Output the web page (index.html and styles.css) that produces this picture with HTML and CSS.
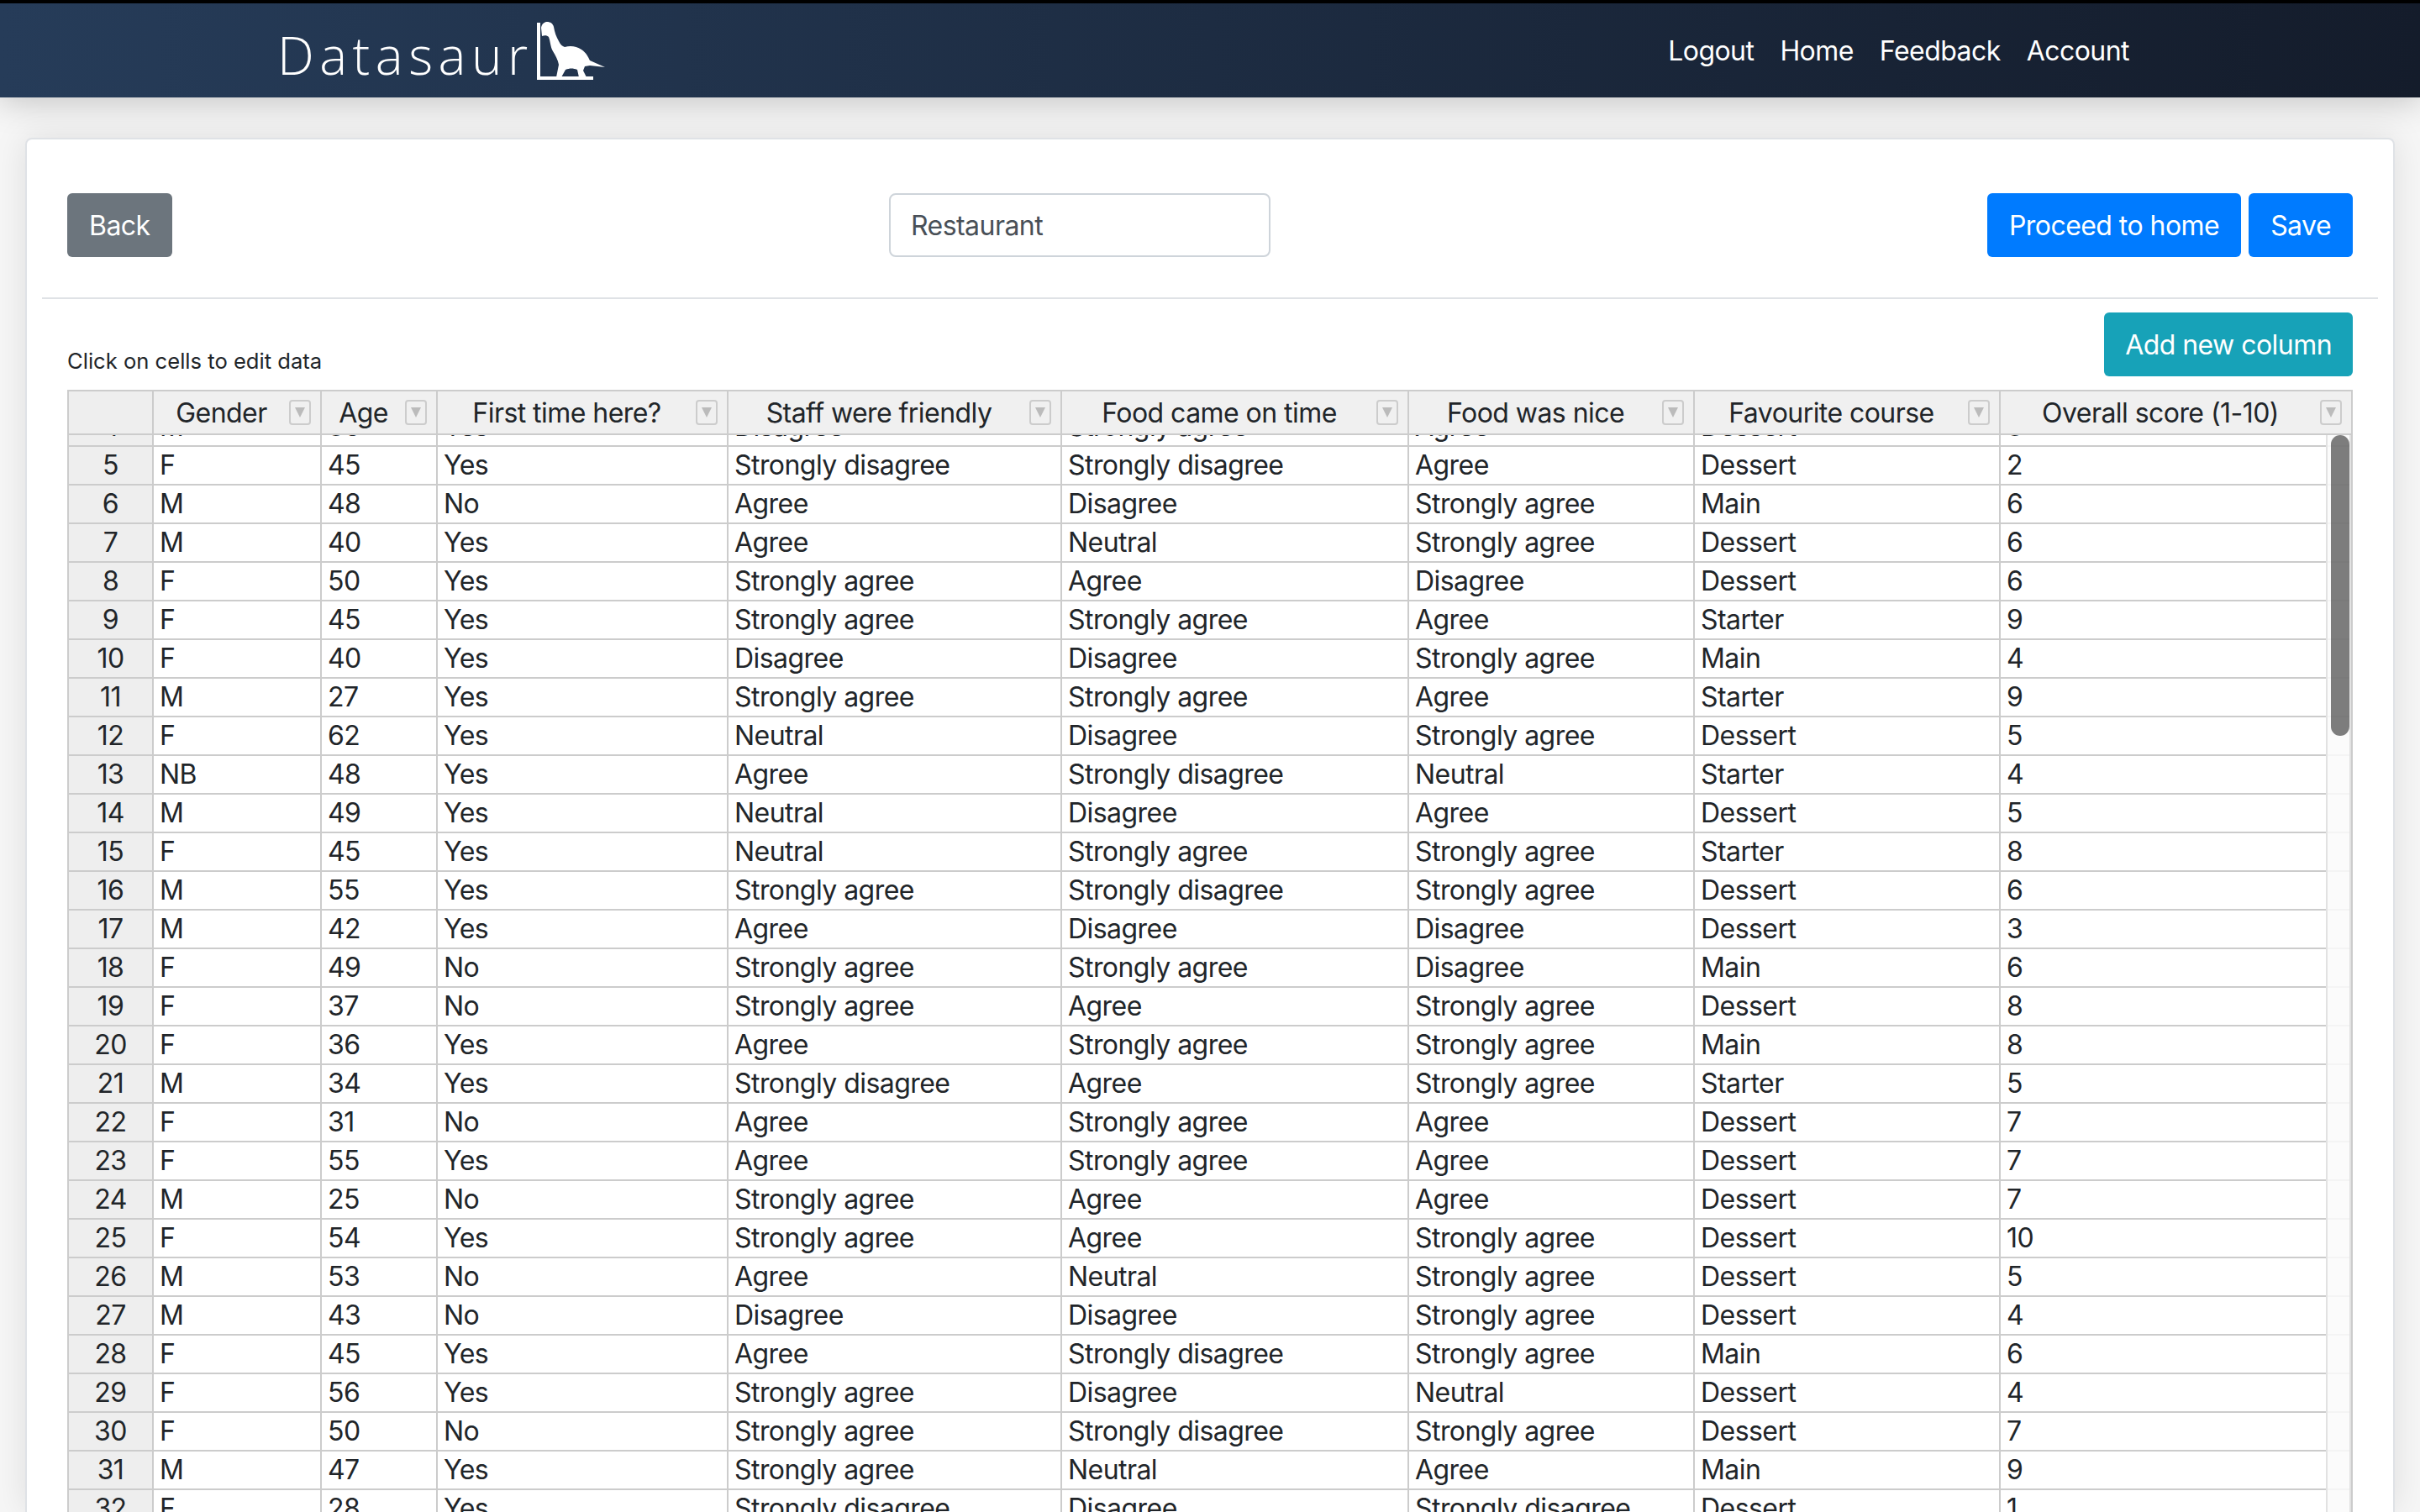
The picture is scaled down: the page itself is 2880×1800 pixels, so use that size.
FILE: index.html
```html
<!DOCTYPE html>
<html lang="en">
<head>
<meta charset="utf-8">
<title>Datasaur</title>
<link rel="stylesheet" href="styles.css">
</head>
<body>
<nav class="nav">
  <a class="brand"><span class="brand-text">Datasaur</span><svg class="dino" viewBox="0 0 100 80" aria-hidden="true"><path class="dino-shape" d="M7 7h4v64h63v4H7z"/><path class="dino-shape" d="M12 13C13 8 16 6 19 6c4 0 7 2 8 6 1 6 3 12 6 17 2 4 4 6 7 7 7-2 14-1 20 3 6 4 8 9 10 13l18 8-18-2-6 1-2 5 4 8h-9l-2-9c-5-2-9-2-14 0l-5 9h-6l3-15c-1-6-4-11-7-16-3-5-3-12-5-17-2-2-5-2-8-1z"/></svg></a>
  <div class="nav-links"><a>Logout</a><a>Home</a><a>Feedback</a><a>Account</a></div>
</nav>
<main class="card">
  <div class="toolbar">
    <button class="btn btn-grey">Back</button>
    <div class="name-box">Restaurant</div>
    <div class="actions"><button class="btn btn-blue">Proceed to home</button><button class="btn btn-blue">Save</button></div>
  </div>
  <hr class="rule">
  <div class="sheet-area">
    <div class="sheet-head">
      <small class="hint">Click on cells to edit data</small>
      <button class="btn btn-teal">Add new column</button>
    </div>
    <div class="sheet">
      <div class="row head">
        <div class="c n"></div>
        <div class="c"><span class="label">Gender</span><span class="filter"></span></div>
        <div class="c"><span class="label">Age</span><span class="filter"></span></div>
        <div class="c"><span class="label">First time here?</span><span class="filter"></span></div>
        <div class="c"><span class="label">Staff were friendly</span><span class="filter"></span></div>
        <div class="c"><span class="label">Food came on time</span><span class="filter"></span></div>
        <div class="c"><span class="label">Food was nice</span><span class="filter"></span></div>
        <div class="c"><span class="label">Favourite course</span><span class="filter"></span></div>
        <div class="c"><span class="label">Overall score (1-10)</span><span class="filter"></span></div>
      </div>
      <div class="viewport">
        <div class="rows">
          <div class="row"><div class="c n">4</div><div class="c">M</div><div class="c">36</div><div class="c">Yes</div><div class="c">Disagree</div><div class="c">Strongly agree</div><div class="c">Agree</div><div class="c">Dessert</div><div class="c">3</div></div>
          <div class="row"><div class="c n">5</div><div class="c">F</div><div class="c">45</div><div class="c">Yes</div><div class="c">Strongly disagree</div><div class="c">Strongly disagree</div><div class="c">Agree</div><div class="c">Dessert</div><div class="c">2</div></div>
          <div class="row"><div class="c n">6</div><div class="c">M</div><div class="c">48</div><div class="c">No</div><div class="c">Agree</div><div class="c">Disagree</div><div class="c">Strongly agree</div><div class="c">Main</div><div class="c">6</div></div>
          <div class="row"><div class="c n">7</div><div class="c">M</div><div class="c">40</div><div class="c">Yes</div><div class="c">Agree</div><div class="c">Neutral</div><div class="c">Strongly agree</div><div class="c">Dessert</div><div class="c">6</div></div>
          <div class="row"><div class="c n">8</div><div class="c">F</div><div class="c">50</div><div class="c">Yes</div><div class="c">Strongly agree</div><div class="c">Agree</div><div class="c">Disagree</div><div class="c">Dessert</div><div class="c">6</div></div>
          <div class="row"><div class="c n">9</div><div class="c">F</div><div class="c">45</div><div class="c">Yes</div><div class="c">Strongly agree</div><div class="c">Strongly agree</div><div class="c">Agree</div><div class="c">Starter</div><div class="c">9</div></div>
          <div class="row"><div class="c n">10</div><div class="c">F</div><div class="c">40</div><div class="c">Yes</div><div class="c">Disagree</div><div class="c">Disagree</div><div class="c">Strongly agree</div><div class="c">Main</div><div class="c">4</div></div>
          <div class="row"><div class="c n">11</div><div class="c">M</div><div class="c">27</div><div class="c">Yes</div><div class="c">Strongly agree</div><div class="c">Strongly agree</div><div class="c">Agree</div><div class="c">Starter</div><div class="c">9</div></div>
          <div class="row"><div class="c n">12</div><div class="c">F</div><div class="c">62</div><div class="c">Yes</div><div class="c">Neutral</div><div class="c">Disagree</div><div class="c">Strongly agree</div><div class="c">Dessert</div><div class="c">5</div></div>
          <div class="row"><div class="c n">13</div><div class="c">NB</div><div class="c">48</div><div class="c">Yes</div><div class="c">Agree</div><div class="c">Strongly disagree</div><div class="c">Neutral</div><div class="c">Starter</div><div class="c">4</div></div>
          <div class="row"><div class="c n">14</div><div class="c">M</div><div class="c">49</div><div class="c">Yes</div><div class="c">Neutral</div><div class="c">Disagree</div><div class="c">Agree</div><div class="c">Dessert</div><div class="c">5</div></div>
          <div class="row"><div class="c n">15</div><div class="c">F</div><div class="c">45</div><div class="c">Yes</div><div class="c">Neutral</div><div class="c">Strongly agree</div><div class="c">Strongly agree</div><div class="c">Starter</div><div class="c">8</div></div>
          <div class="row"><div class="c n">16</div><div class="c">M</div><div class="c">55</div><div class="c">Yes</div><div class="c">Strongly agree</div><div class="c">Strongly disagree</div><div class="c">Strongly agree</div><div class="c">Dessert</div><div class="c">6</div></div>
          <div class="row"><div class="c n">17</div><div class="c">M</div><div class="c">42</div><div class="c">Yes</div><div class="c">Agree</div><div class="c">Disagree</div><div class="c">Disagree</div><div class="c">Dessert</div><div class="c">3</div></div>
          <div class="row"><div class="c n">18</div><div class="c">F</div><div class="c">49</div><div class="c">No</div><div class="c">Strongly agree</div><div class="c">Strongly agree</div><div class="c">Disagree</div><div class="c">Main</div><div class="c">6</div></div>
          <div class="row"><div class="c n">19</div><div class="c">F</div><div class="c">37</div><div class="c">No</div><div class="c">Strongly agree</div><div class="c">Agree</div><div class="c">Strongly agree</div><div class="c">Dessert</div><div class="c">8</div></div>
          <div class="row"><div class="c n">20</div><div class="c">F</div><div class="c">36</div><div class="c">Yes</div><div class="c">Agree</div><div class="c">Strongly agree</div><div class="c">Strongly agree</div><div class="c">Main</div><div class="c">8</div></div>
          <div class="row"><div class="c n">21</div><div class="c">M</div><div class="c">34</div><div class="c">Yes</div><div class="c">Strongly disagree</div><div class="c">Agree</div><div class="c">Strongly agree</div><div class="c">Starter</div><div class="c">5</div></div>
          <div class="row"><div class="c n">22</div><div class="c">F</div><div class="c">31</div><div class="c">No</div><div class="c">Agree</div><div class="c">Strongly agree</div><div class="c">Agree</div><div class="c">Dessert</div><div class="c">7</div></div>
          <div class="row"><div class="c n">23</div><div class="c">F</div><div class="c">55</div><div class="c">Yes</div><div class="c">Agree</div><div class="c">Strongly agree</div><div class="c">Agree</div><div class="c">Dessert</div><div class="c">7</div></div>
          <div class="row"><div class="c n">24</div><div class="c">M</div><div class="c">25</div><div class="c">No</div><div class="c">Strongly agree</div><div class="c">Agree</div><div class="c">Agree</div><div class="c">Dessert</div><div class="c">7</div></div>
          <div class="row"><div class="c n">25</div><div class="c">F</div><div class="c">54</div><div class="c">Yes</div><div class="c">Strongly agree</div><div class="c">Agree</div><div class="c">Strongly agree</div><div class="c">Dessert</div><div class="c">10</div></div>
          <div class="row"><div class="c n">26</div><div class="c">M</div><div class="c">53</div><div class="c">No</div><div class="c">Agree</div><div class="c">Neutral</div><div class="c">Strongly agree</div><div class="c">Dessert</div><div class="c">5</div></div>
          <div class="row"><div class="c n">27</div><div class="c">M</div><div class="c">43</div><div class="c">No</div><div class="c">Disagree</div><div class="c">Disagree</div><div class="c">Strongly agree</div><div class="c">Dessert</div><div class="c">4</div></div>
          <div class="row"><div class="c n">28</div><div class="c">F</div><div class="c">45</div><div class="c">Yes</div><div class="c">Agree</div><div class="c">Strongly disagree</div><div class="c">Strongly agree</div><div class="c">Main</div><div class="c">6</div></div>
          <div class="row"><div class="c n">29</div><div class="c">F</div><div class="c">56</div><div class="c">Yes</div><div class="c">Strongly agree</div><div class="c">Disagree</div><div class="c">Neutral</div><div class="c">Dessert</div><div class="c">4</div></div>
          <div class="row"><div class="c n">30</div><div class="c">F</div><div class="c">50</div><div class="c">No</div><div class="c">Strongly agree</div><div class="c">Strongly disagree</div><div class="c">Strongly agree</div><div class="c">Dessert</div><div class="c">7</div></div>
          <div class="row"><div class="c n">31</div><div class="c">M</div><div class="c">47</div><div class="c">Yes</div><div class="c">Strongly agree</div><div class="c">Neutral</div><div class="c">Agree</div><div class="c">Main</div><div class="c">9</div></div>
          <div class="row"><div class="c n">32</div><div class="c">F</div><div class="c">28</div><div class="c">Yes</div><div class="c">Strongly disagree</div><div class="c">Disagree</div><div class="c">Strongly disagree</div><div class="c">Dessert</div><div class="c">1</div></div>
        </div>
        <div class="track"><div class="thumb"></div></div>
      </div>
    </div>
  </div>
</main>
</body>
</html>
```
FILE: styles.css
```css
* { box-sizing: border-box; }
html, body { height: 100%; margin: 0; overflow: hidden; }
body {
  display: flex;
  flex-direction: column;
  background: #f6f6f6;
  color: #212529;
  font-family: Inter, "Liberation Sans", sans-serif;
  font-size: 32px;
  line-height: 44px;
  letter-spacing: -.55px;
}
.nav {
  position: relative;
  z-index: 2;
  flex: none;
  height: 116px;
  border-top: 4px solid #000;
  background: linear-gradient(90deg, #263c59, #141c2b);
  box-shadow: 0 4px 40px rgba(0, 0, 0, .22);
  display: flex;
  align-items: center;
  padding: 0 346px 0 330px;
  color: #fff;
}
.brand { display: flex; align-items: flex-start; flex: 1; height: 100%; }
.brand-text {
  font-family: "Open Sans", sans-serif;
  font-weight: 350;
  font-size: 62px;
  line-height: 84px;
  letter-spacing: 6.5px;
  margin-top: 19px;
}
.dino { width: 100px; height: 80px; margin: 16px 0 0 -3px; }
.dino-shape { fill: #fff; }
.nav-links { display: flex; gap: 31px; padding-top: 2px; }
.card {
  flex: 1;
  min-height: 0;
  margin: 48px 30px 0;
  padding: 64px 18px 0;
  background: #fff;
  border: 2px solid #dfe2e6;
  border-bottom: 0;
  border-radius: 8px 8px 0 0;
  box-shadow: 0 0 40px rgba(0, 0, 0, .1);
  overflow: hidden;
  display: flex;
  flex-direction: column;
}
.toolbar {
  flex: none;
  display: grid;
  grid-template-columns: 978px 454px 1fr;
  padding: 0 30px;
}
.btn {
  height: 76px;
  padding: 2px 26px 0;
  border: 0;
  border-radius: 6px;
  color: #fff;
  font: inherit;
  letter-spacing: inherit;
  white-space: nowrap;
}
.toolbar .btn-grey { justify-self: start; }
.btn-grey { background: #6c757d; }
.btn-blue { background: #007bff; }
.btn-teal { background: #17a2b8; padding-left: 25px; padding-right: 25px; }
.name-box {
  height: 76px;
  border: 2px solid #ced4da;
  border-radius: 8px;
  padding: 15px 24px 0;
  color: #495057;
}
.actions { display: flex; justify-content: flex-end; gap: 9px; }
.rule { flex: none; width: 100%; height: 2px; margin: 48px 0 0; border: 0; background: #dfe2e6; }
.sheet-area { flex: 1; min-height: 0; padding: 16px 30px 0; display: flex; flex-direction: column; }
.sheet-head { flex: none; display: flex; justify-content: space-between; align-items: flex-end; margin-bottom: 16px; }
.hint { font-size: 25.6px; line-height: 36px; letter-spacing: 0; }
.sheet { flex: 1; min-height: 0; display: flex; flex-direction: column; }
.row {
  display: grid;
  grid-template-columns: 101px 200px 138px 346px 397px 413px 340px 364px 421px;
  height: 46px;
  border-bottom: 2px solid #ccc;
}
.c {
  border-left: 2px solid #ccc;
  padding-left: 7px;
  white-space: nowrap;
  overflow: hidden;
}
.c:last-child { border-right: 2px solid #ccc; }
.n { background: #eee; padding: 0; text-align: center; }
.head { flex: none; height: 54px; border-top: 2px solid #ccc; background: #f0f0f0; }
.head .c { display: flex; align-items: center; padding: 0 11px 0 0; }
.label { flex: 1; text-align: center; padding-top: 2px; }
.filter {
  flex: none;
  width: 26px;
  height: 30px;
  border: 2px solid #ccc;
  border-radius: 4px;
  display: flex;
  align-items: center;
  justify-content: center;
}
.filter::after {
  content: "";
  border-left: 6px solid transparent;
  border-right: 6px solid transparent;
  border-top: 12px solid #bbb;
}
.viewport { position: relative; flex: 1; min-height: 0; overflow: hidden; }
.rows { margin-top: -32px; }
.track {
  position: absolute;
  top: 0;
  bottom: 0;
  right: 2px;
  width: 30px;
  background: rgba(250, 250, 250, .85);
  border-left: 2px solid #e2e2e2;
  border-right: 2px solid #e2e2e2;
}
.thumb {
  position: absolute;
  top: 0;
  left: 4px;
  width: 22px;
  height: 358px;
  border-radius: 11px;
  background: rgba(0, 0, 0, .5);
}
```
